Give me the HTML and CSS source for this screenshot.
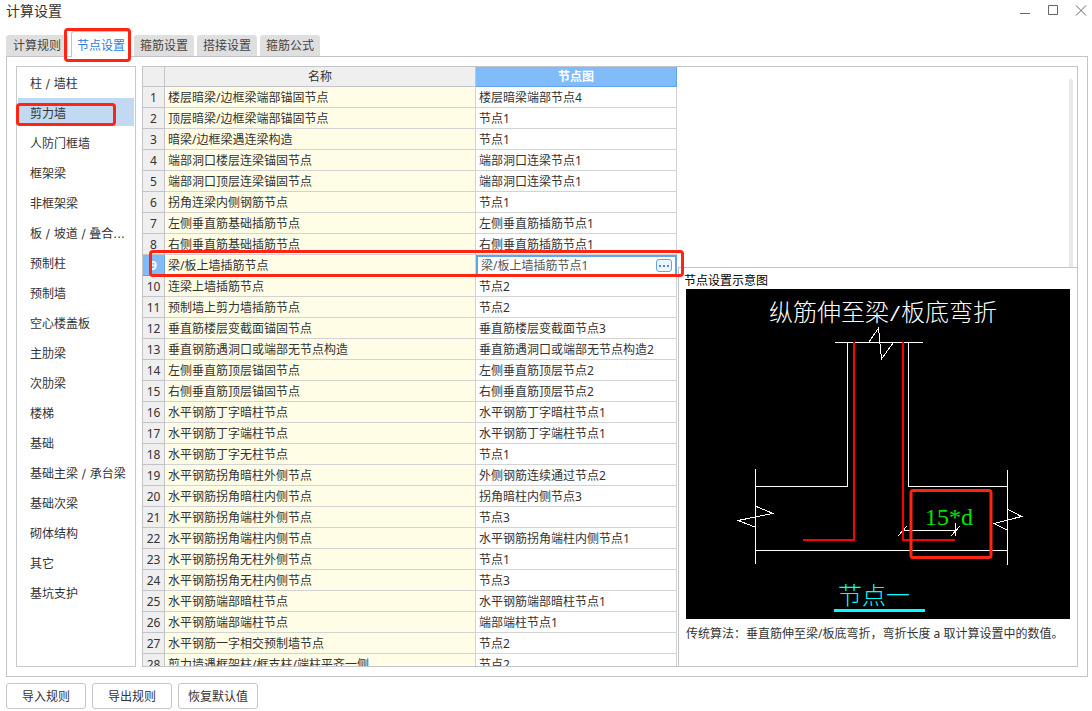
FILE: index.html
```html
<!DOCTYPE html>
<html lang="zh-CN">
<head>
<meta charset="utf-8">
<title>计算设置</title>
<link rel="stylesheet" href="styles.css">
</head>
<body>
<div class="window">
  <header class="titlebar">
    <h1 class="title">计算设置</h1>
    <div class="controls">
      <button type="button" class="control" aria-label="最小化"><svg width="12" height="12" viewBox="0 0 12 12"><path d="M1 8.5h10"/></svg></button>
      <button type="button" class="control" aria-label="最大化"><svg width="12" height="12" viewBox="0 0 12 12"><path d="M1.500 .5h9v9h-9z"/></svg></button>
      <button type="button" class="control control-close" aria-label="关闭"><svg width="12" height="12" viewBox="0 0 12 12"><path d="M1 0.500l10 10M11 0.500l-10 10"/></svg></button>
    </div>
  </header>

  <nav class="tabs" role="tablist">
    <button type="button" class="tab" role="tab">计算规则</button>
    <button type="button" class="tab active" role="tab" aria-selected="true">节点设置<span class="mark mark-tab"></span></button>
    <button type="button" class="tab" role="tab">箍筋设置</button>
    <button type="button" class="tab" role="tab">搭接设置</button>
    <button type="button" class="tab" role="tab">箍筋公式</button>
  </nav>

  <main class="panel">
    <ul class="categories">
      <li><button type="button" class="category">柱 / 墙柱</button></li>
      <li><button type="button" class="category selected">剪力墙<span class="mark mark-category"></span></button></li>
      <li><button type="button" class="category">人防门框墙</button></li>
      <li><button type="button" class="category">框架梁</button></li>
      <li><button type="button" class="category">非框架梁</button></li>
      <li><button type="button" class="category">板 / 坡道 / 叠合...</button></li>
      <li><button type="button" class="category">预制柱</button></li>
      <li><button type="button" class="category">预制墙</button></li>
      <li><button type="button" class="category">空心楼盖板</button></li>
      <li><button type="button" class="category">主肋梁</button></li>
      <li><button type="button" class="category">次肋梁</button></li>
      <li><button type="button" class="category">楼梯</button></li>
      <li><button type="button" class="category">基础</button></li>
      <li><button type="button" class="category">基础主梁 / 承台梁</button></li>
      <li><button type="button" class="category">基础次梁</button></li>
      <li><button type="button" class="category">砌体结构</button></li>
      <li><button type="button" class="category">其它</button></li>
      <li><button type="button" class="category">基坑支护</button></li>
    </ul>

    <section class="content">
      <div class="grid">
        <div class="grid-view">
          <table class="nodes">
            <colgroup><col class="col-number"><col class="col-name"><col class="col-node"></colgroup>
            <thead>
              <tr><th></th><th>名称</th><th class="current">节点图</th></tr>
            </thead>
            <tbody>
              <tr><th>1</th><td>楼层暗梁/边框梁端部锚固节点</td><td>楼层暗梁端部节点4</td></tr>
              <tr><th>2</th><td>顶层暗梁/边框梁端部锚固节点</td><td>节点1</td></tr>
              <tr><th>3</th><td>暗梁/边框梁遇连梁构造</td><td>节点1</td></tr>
              <tr><th>4</th><td>端部洞口楼层连梁锚固节点</td><td>端部洞口连梁节点1</td></tr>
              <tr><th>5</th><td>端部洞口顶层连梁锚固节点</td><td>端部洞口连梁节点1</td></tr>
              <tr><th>6</th><td>拐角连梁内侧钢筋节点</td><td>节点1</td></tr>
              <tr><th>7</th><td>左侧垂直筋基础插筋节点</td><td>左侧垂直筋插筋节点1</td></tr>
              <tr><th>8</th><td>右侧垂直筋基础插筋节点</td><td>右侧垂直筋插筋节点1</td></tr>
              <tr><th class="current">9</th><td>梁/板上墙插筋节点</td><td class="editing"><div class="editor"><span>梁/板上墙插筋节点1</span><button type="button" class="more" aria-label="选择节点"><svg width="12" height="4" viewBox="0 0 12 4"><path d="M1 1h2v2H1zM5 1h2v2H5zM9 1h2v2H9z"/></svg></button></div></td></tr>
              <tr><th>10</th><td>连梁上墙插筋节点</td><td>节点2</td></tr>
              <tr><th>11</th><td>预制墙上剪力墙插筋节点</td><td>节点2</td></tr>
              <tr><th>12</th><td>垂直筋楼层变截面锚固节点</td><td>垂直筋楼层变截面节点3</td></tr>
              <tr><th>13</th><td>垂直钢筋遇洞口或端部无节点构造</td><td>垂直筋遇洞口或端部无节点构造2</td></tr>
              <tr><th>14</th><td>左侧垂直筋顶层锚固节点</td><td>左侧垂直筋顶层节点2</td></tr>
              <tr><th>15</th><td>右侧垂直筋顶层锚固节点</td><td>右侧垂直筋顶层节点2</td></tr>
              <tr><th>16</th><td>水平钢筋丁字暗柱节点</td><td>水平钢筋丁字暗柱节点1</td></tr>
              <tr><th>17</th><td>水平钢筋丁字端柱节点</td><td>水平钢筋丁字端柱节点1</td></tr>
              <tr><th>18</th><td>水平钢筋丁字无柱节点</td><td>节点1</td></tr>
              <tr><th>19</th><td>水平钢筋拐角暗柱外侧节点</td><td>外侧钢筋连续通过节点2</td></tr>
              <tr><th>20</th><td>水平钢筋拐角暗柱内侧节点</td><td>拐角暗柱内侧节点3</td></tr>
              <tr><th>21</th><td>水平钢筋拐角端柱外侧节点</td><td>节点3</td></tr>
              <tr><th>22</th><td>水平钢筋拐角端柱内侧节点</td><td>水平钢筋拐角端柱内侧节点1</td></tr>
              <tr><th>23</th><td>水平钢筋拐角无柱外侧节点</td><td>节点1</td></tr>
              <tr><th>24</th><td>水平钢筋拐角无柱内侧节点</td><td>节点3</td></tr>
              <tr><th>25</th><td>水平钢筋端部暗柱节点</td><td>水平钢筋端部暗柱节点1</td></tr>
              <tr><th>26</th><td>水平钢筋端部端柱节点</td><td>端部端柱节点1</td></tr>
              <tr><th>27</th><td>水平钢筋一字相交预制墙节点</td><td>节点2</td></tr>
              <tr><th>28</th><td>剪力墙遇框架柱/框支柱/端柱平齐一侧</td><td>节点2</td></tr>
            </tbody>
          </table>
        </div>
        <span class="mark mark-row"></span>
      </div>

      <aside class="side">
        <div class="notes"><div class="scrollbar"></div></div>
        <div class="preview">
          <h2 class="preview-title">节点设置示意图</h2>
          <svg class="diagram" viewBox="0 0 384 330" role="img" aria-label="节点一">
            <rect width="384" height="330" fill="#000"/>
            <text class="cad" x="83" y="32" fill="#fff">纵筋伸至梁<tspan class="cad-slash">/</tspan>板底弯折</text>
            <g fill="none" stroke="#fff" shape-rendering="crispEdges">
              <path d="M149 53.500H237M161.500 53V197.500H69M222.500 53V197.500H321M69 261.500H321"/>
              <path d="M69.500 180V275M321.500 181V276"/>
              <path d="M183 53L192.500 39L195.500 70L207 54"/>
              <path d="M69 217L87 224.500L52 231.500L69 238M321 220L335.500 227.500L308 234.500L321 241"/>
              <path d="M217 241.500H269M269.500 234V247M212 247L221 237M265 247L274 237"/>
            </g>
            <path d="M168 53V251H117M217 53V251H269" fill="none" stroke="#f00" stroke-width="2"/>
            <text class="cad-latin" x="239" y="236" fill="#00e400">15*d</text>
            <text class="cad" x="152" y="315" fill="#0ff">节点一</text>
            <rect x="148" y="320" width="91" height="3" fill="#0ff"/>
            <rect x="225" y="201.500" width="80" height="67" rx="2" fill="none" stroke="#ff2414" stroke-width="3"/>
          </svg>
          <p class="caption">传统算法：垂直筋伸至梁/板底弯折，弯折长度 a 取计算设置中的数值。</p>
        </div>
      </aside>
    </section>
  </main>

  <footer class="actions">
    <button type="button" class="action">导入规则</button>
    <button type="button" class="action">导出规则</button>
    <button type="button" class="action">恢复默认值</button>
  </footer>
</div>
</body>
</html>
```
FILE: styles.css
```css
* {
  box-sizing: border-box;
}

body {
  margin: 0;
  background: #fff;
  color: #333;
  font: 12px/18px "Noto Sans", "Noto Sans CJK SC", sans-serif;
}

button {
  margin: 0;
  padding: 0;
  border: 0;
  background: none;
  color: inherit;
  font: inherit;
}

.window {
  display: flex;
  flex-direction: column;
  height: 100vh;
  padding: 0 4px 2px 6px;
}

.titlebar {
  display: flex;
  flex: none;
  justify-content: space-between;
  height: 31px;
}

.title {
  margin: 0;
  font-size: 14px;
  font-weight: 400;
  line-height: 22px;
}

.controls {
  display: flex;
  gap: 16px;
  margin-right: 1px;
  padding-top: 5px;
}

.control {
  width: 12px;
  height: 12px;
}

.control svg {
  display: block;
  fill: none;
  stroke: #666;
}

.tabs {
  display: flex;
  flex: none;
  align-items: flex-end;
  gap: 3px;
  height: 25px;
}

.tab {
  position: relative;
  height: 21px;
  padding: 0 6px;
  border-radius: 3px 3px 0 0;
  background: #dfdfdf;
  color: #444;
}

.tab:first-child {
  padding: 0 7px;
}

.tab.active {
  z-index: 1;
  height: 26px;
  margin-bottom: -1px;
  padding: 2px 5px 0;
  border: 1px solid #c3c4ca;
  border-bottom: 0;
  background: #fff;
  color: #2a7de1;
}

.mark {
  position: absolute;
  z-index: 2;
  border: 3px solid #ff2414;
  border-radius: 4px;
  pointer-events: none;
}

.mark-tab {
  inset: -4px -1px -5px -8px;
}

.mark-category {
  inset: 5px 18px 0 -2px;
}

.mark-row {
  top: 183px;
  right: -6px;
  left: 6px;
  height: 27px;
}

.panel {
  display: flex;
  flex: 1;
  gap: 6px;
  min-height: 0;
  padding: 9px;
  border: 1px solid #c3c4ca;
}

.categories {
  display: flex;
  flex: none;
  flex-direction: column;
  gap: 2px;
  width: 120px;
  margin: 0;
  padding: 1px;
  border: 1px solid #c8c9cb;
  list-style: none;
}

.category {
  display: block;
  position: relative;
  width: 100%;
  height: 28px;
  padding: 3px 0 0 12px;
  font-family: "DejaVu Sans", "Noto Sans CJK SC", sans-serif;
  text-align: left;
  white-space: nowrap;
}

.category.selected {
  background: #c2d9f2;
}

.content {
  display: flex;
  flex: 1;
  min-width: 0;
  border: 1px solid #c3c4ca;
}

.grid {
  position: relative;
  flex: 1 1 535px;
  min-width: 0;
  padding-right: 1px;
}

.grid-view {
  height: 100%;
  overflow: hidden;
}

.nodes {
  width: 100%;
  table-layout: fixed;
  border-collapse: separate;
  border-spacing: 0;
}

.col-number {
  width: 22px;
}

.col-node {
  width: 201px;
}

.nodes th,
.nodes td {
  height: 21px;
  padding: 2px 3px 0;
  border-right: 1px solid #d3d3d3;
  border-bottom: 1px solid #d3d3d3;
  text-align: left;
  white-space: nowrap;
}

.nodes th {
  padding: 2px 0 0;
  border-color: #c3c4ca;
  background: #efefef;
  font-weight: 400;
  text-align: center;
}

.nodes thead th {
  height: 20px;
  padding: 1px 0 0;
}

.nodes td:nth-child(2) {
  background: #fffde6;
}

.nodes .current {
  border-color: #62a4ea;
  background: #80bbfa;
  color: #fff;
  font-weight: 700;
}

.nodes .editing {
  padding: 0;
  border: 2px solid #62a4ea;
}

.editor {
  display: flex;
  align-items: center;
  justify-content: space-between;
  height: 17px;
  padding: 0 3px;
  color: #555;
}

.more {
  display: flex;
  align-items: center;
  justify-content: center;
  width: 16px;
  height: 13px;
  border: 1px solid #62a4ea;
  border-radius: 3px;
  background: #eef5fd;
}

.more svg {
  flex: none;
  fill: #3c8ae6;
}

.side {
  display: flex;
  flex: 1 1 399px;
  flex-direction: column;
  min-width: 0;
}

.notes {
  display: flex;
  flex: none;
  justify-content: flex-end;
  height: 200px;
  padding: 12px 4px 0 0;
}

.scrollbar {
  width: 4px;
  border-radius: 2px 2px 0 0;
  background: #e9e9e9;
}

.preview {
  flex: 1;
  min-height: 0;
  padding: 5px 7px 0;
  border-top: 1px solid #c3c4ca;
  border-left: 1px solid #c3c4ca;
  overflow: hidden;
}

.preview-title {
  margin: 0 -2px;
  color: #000;
  font-size: 12px;
  font-weight: 400;
  line-height: 16px;
}

.diagram {
  display: block;
  width: 100%;
}

.cad {
  font: 300 24px "Noto Sans CJK SC", sans-serif;
}

.cad-slash {
  font: 20px "Liberation Mono", monospace;
}

.cad-latin {
  font: 24px "Liberation Serif", serif;
}

.caption {
  margin: 6px 0 0;
  white-space: nowrap;
}

.actions {
  display: flex;
  flex: none;
  gap: 6px;
  padding-top: 6px;
}

.action {
  width: 80px;
  height: 26px;
  padding-top: 2px;
  border: 1px solid #c6c6c6;
  border-radius: 3px;
  background: #fff;
}
```
